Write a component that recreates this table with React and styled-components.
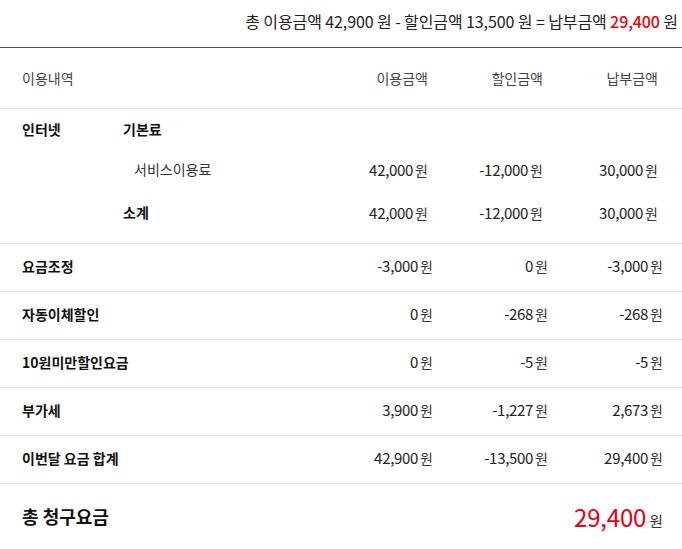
import React from 'react'
import styled, { createGlobalStyle } from 'styled-components'

const GlobalStyle = createGlobalStyle`
    body {
        margin: 0;
        background: #fff;
        font-family: "Noto Sans CJK KR", "Noto Sans", sans-serif;
        color: #222;
    }
`

const rows = [
    { label: '요금조정', use: '-3,000', discount: '0', pay: '-3,000' },
    { label: '자동이체할인', use: '0', discount: '-268', pay: '-268' },
    { label: '10원미만할인요금', use: '0', discount: '-5', pay: '-5' },
    { label: '부가세', use: '3,900', discount: '-1,227', pay: '2,673' },
    { label: '이번달 요금 합계', use: '42,900', discount: '-13,500', pay: '29,400' },
]

const Won = ({ value }) => (
    <Amount>
        {value}<Unit>원</Unit>
    </Amount>
)

export default function App() {
    return (
        <>
            <GlobalStyle />
            <Bill>
                <Summary>
                    총 이용금액 42,900 원 - 할인금액 13,500 원 = 납부금액 <Red $bold>29,400</Red> 원
                </Summary>

                <HeadRow>
                    <span>이용내역</span>
                    <span>이용금액</span>
                    <span>할인금액</span>
                    <span>납부금액</span>
                </HeadRow>

                <Block>
                    <SubRow>
                        <Label>인터넷</Label>
                        <Label>기본료</Label>
                    </SubRow>
                    <SubRow>
                        <span />
                        <Item>서비스이용료</Item>
                        <Won value="42,000" />
                        <Won value="-12,000" />
                        <Won value="30,000" />
                    </SubRow>
                    <SubRow $last>
                        <span />
                        <Label>소계</Label>
                        <Won value="42,000" />
                        <Won value="-12,000" />
                        <Won value="30,000" />
                    </SubRow>
                </Block>

                {rows.map(r => (
                    <Row key={r.label}>
                        <Label>{r.label}</Label>
                        <Won value={r.use} />
                        <Won value={r.discount} />
                        <Won value={r.pay} />
                    </Row>
                ))}

                <Total>
                    <TotalLabel>총 청구요금</TotalLabel>
                    <TotalAmount>
                        <Red>29,400</Red>
                        <Unit $big>원</Unit>
                    </TotalAmount>
                </Total>
            </Bill>
        </>
    )
}

const Bill = styled.div`
    width: 682px;
`

const Red = styled.span`
    color: #e60012;
    font-weight: ${p => (p.$bold ? 500 : 400)};
`

const Summary = styled.div`
    height: 48px;
    box-sizing: border-box;
    padding: 9px 4px 0 0;
    text-align: right;
    font-size: 16px;
    letter-spacing: -0.1px;
    color: #222;
    border-bottom: 1px solid #555;
`

const HeadRow = styled.div`
    display: grid;
    grid-template-columns: 1fr 115px 115px 115px;
    align-items: center;
    height: 60px;
    padding: 0 24px 0 22px;
    font-size: 14px;
    color: #444;
    border-bottom: 1px solid #ddd;
    span:not(:first-child) {
        text-align: right;
    }
`

const Block = styled.div`
    padding: 0 24px 11px 22px;
    border-bottom: 1px solid #ddd;
`

const SubRow = styled.div`
    display: grid;
    grid-template-columns: 101px 1fr 115px 115px 115px;
    align-items: center;
    height: 40px;
    margin-top: ${p => (p.$last ? '3px' : '0')};
`

const Row = styled.div`
    display: grid;
    grid-template-columns: 1fr 115px 115px 115px;
    align-items: center;
    box-sizing: border-box;
    height: 48px;
    padding: 0 19px 4px 22px;
    border-bottom: 1px solid #ddd;
`

const Label = styled.span`
    font-size: 14px;
    font-weight: 700;
    color: #111;
`

const Item = styled.span`
    padding-left: 11px;
    font-size: 14px;
    color: #333;
`

const Amount = styled.span`
    text-align: right;
    font-size: 15px;
    letter-spacing: -0.3px;
    color: #222;
`

const Unit = styled.span`
    margin-left: ${p => (p.$big ? '3px' : '2px')};
    font-size: ${p => (p.$big ? '15px' : '14px')};
    letter-spacing: 0;
    color: #333;
`

const Total = styled.div`
    display: flex;
    align-items: center;
    justify-content: space-between;
    box-sizing: border-box;
    height: 66px;
    padding: 0 19px 2px 22px;
`

const TotalLabel = styled.span`
    font-size: 18px;
    font-weight: 700;
    color: #111;
`

const TotalAmount = styled.span`
    font-size: 24px;
    letter-spacing: -0.2px;
`
